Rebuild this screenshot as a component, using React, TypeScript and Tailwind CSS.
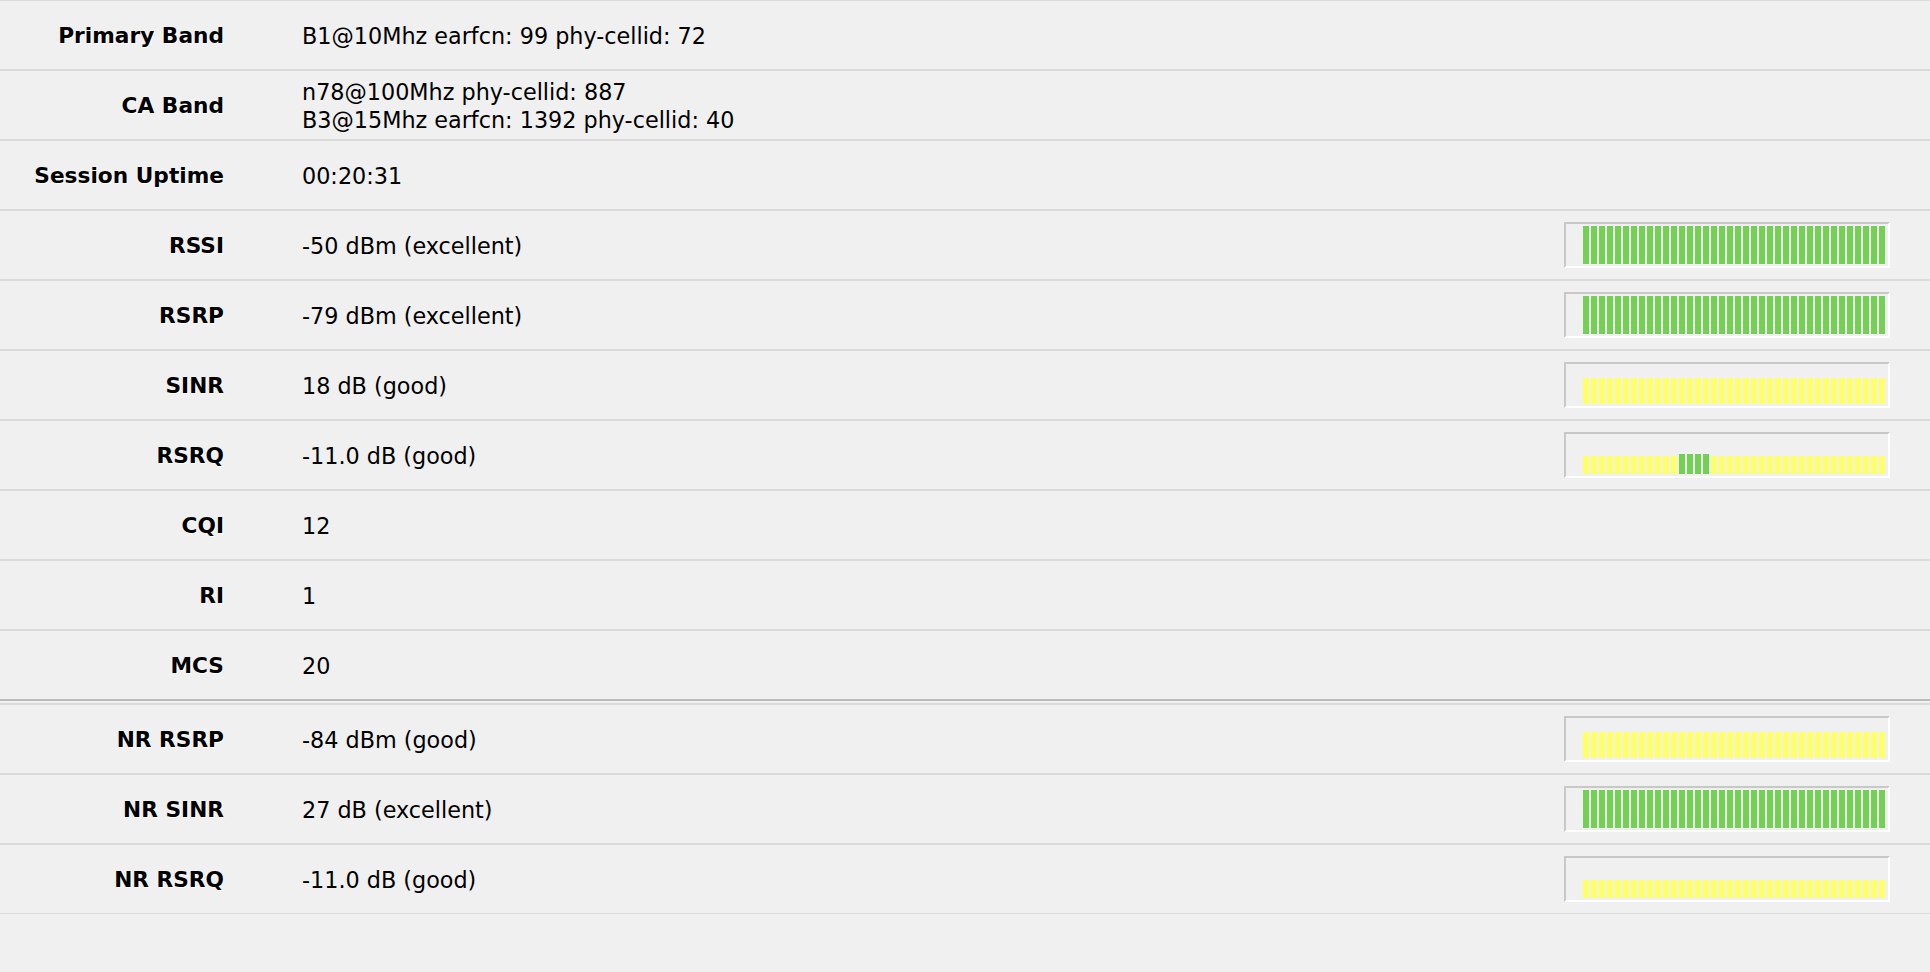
type Bar = { color: 'g' | 'y'; h: number };

type Row = {
  label: string;
  value: string[];
  meter?: Bar[];
};

// 38 segments per meter, each segment its own height and colour
function fill(color: 'g' | 'y', h: number): Bar[] {
  return Array.from({ length: 38 }, () => ({ color, h }));
}

function rsrqBars(): Bar[] {
  return Array.from({ length: 38 }, (_, i) =>
    i >= 12 && i <= 15 ? { color: 'g' as const, h: 20 } : { color: 'y' as const, h: 18 }
  );
}

const lteRows: Row[] = [
  { label: 'Primary Band', value: ['B1@10Mhz earfcn: 99 phy-cellid: 72'] },
  { label: 'CA Band', value: ['n78@100Mhz phy-cellid: 887', 'B3@15Mhz earfcn: 1392 phy-cellid: 40'] },
  { label: 'Session Uptime', value: ['00:20:31'] },
  { label: 'RSSI', value: ['-50 dBm (excellent)'], meter: fill('g', 38) },
  { label: 'RSRP', value: ['-79 dBm (excellent)'], meter: fill('g', 38) },
  { label: 'SINR', value: ['18 dB (good)'], meter: fill('y', 26) },
  { label: 'RSRQ', value: ['-11.0 dB (good)'], meter: rsrqBars() },
  { label: 'CQI', value: ['12'] },
  { label: 'RI', value: ['1'] },
  { label: 'MCS', value: ['20'] },
];

const nrRows: Row[] = [
  { label: 'NR RSRP', value: ['-84 dBm (good)'], meter: fill('y', 26) },
  { label: 'NR SINR', value: ['27 dB (excellent)'], meter: fill('g', 38) },
  { label: 'NR RSRQ', value: ['-11.0 dB (good)'], meter: fill('y', 18) },
];

function Meter({ bars }: { bars: Bar[] }) {
  return (
    <div className="mr-[40px] flex h-[46px] w-[326px] shrink-0 items-end gap-[2px] border-2 border-t-[#c8c8c8] border-l-[#c8c8c8] border-r-white border-b-white pb-[2px] pl-[17px] pr-[3px]">
      {bars.map((b, i) => (
        <div
          key={i}
          className={'w-[6px] shrink-0 ' + (b.color === 'g' ? 'bg-[#73d055]' : 'bg-[#ffff66]')}
          style={{ height: b.h }}
        />
      ))}
    </div>
  );
}

function InfoRow({ row, last }: { row: Row; last?: boolean }) {
  return (
    <div
      className={
        'flex h-[70px] items-center border-t border-b border-t-[#dadada] ' +
        (last ? 'border-b-[#bbbbbb]' : 'border-b-[#dadada]')
      }
    >
      <div className="w-[224px] shrink-0 pt-[2px] text-right text-[21.7px] font-bold text-black [text-shadow:1px_1px_0_#fff]">
        {row.label}
      </div>
      <div className="flex-1 pl-[78px] pt-[2px] text-[22.3px] leading-[28px] text-black">
        {row.value.map((v) => (
          <div key={v}>{v}</div>
        ))}
      </div>
      {row.meter && <Meter bars={row.meter} />}
    </div>
  );
}

export default function App() {
  return (
    <main className="min-h-screen w-full bg-[#f0f0f0] font-['DejaVu_Sans',sans-serif] text-[22px]">
      <section>
        {lteRows.map((r, i) => (
          <InfoRow key={r.label} row={r} last={i === lteRows.length - 1} />
        ))}
      </section>

      {/* divider between LTE and NR blocks */}
      <div className="h-px bg-[#bbbbbb]" />
      <div className="h-[2px]" />
      <div className="h-px bg-[#dadada]" />

      <section>
        {nrRows.map((r) => (
          <InfoRow key={r.label} row={r} />
        ))}
      </section>
    </main>
  );
}
